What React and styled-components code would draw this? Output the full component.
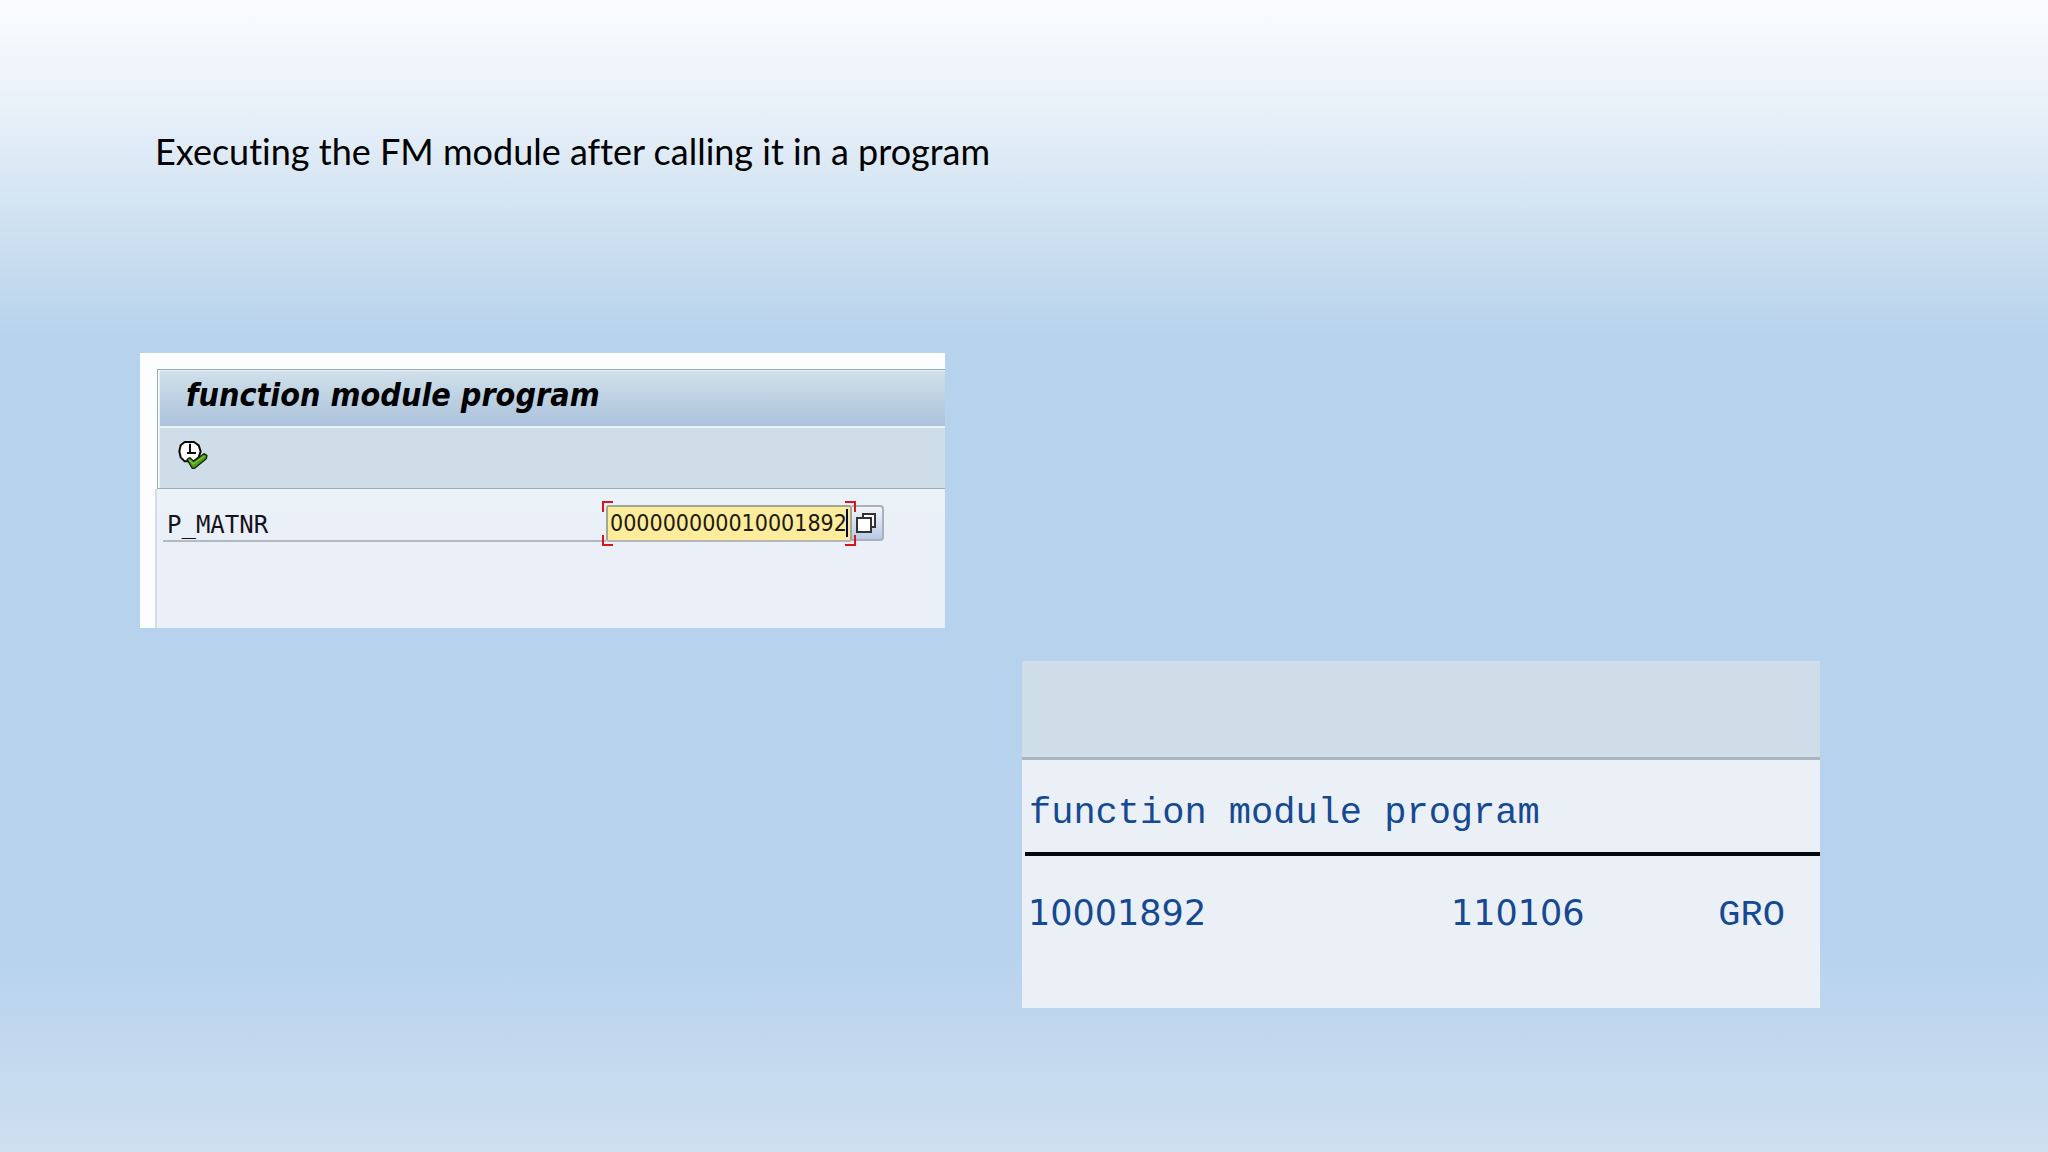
import React from 'react';
import styled, { createGlobalStyle } from 'styled-components';

const listRows = [{ material: '10001892', group: '110106', unit: 'GRO' }];

const ExecuteIcon = () => (
  <svg width="30" height="30" viewBox="42 44 90 90" aria-hidden="true">
    <path
      d="M62 50h28l14 10 6 18-6 18-14 12H62L50 96l-4-18 4-18z"
      fill="#fff"
      stroke="#0a0a0a"
      strokeWidth="6"
      strokeLinejoin="bevel"
    />
    <path d="M78 55v29M69 83h27" fill="none" stroke="#0a0a0a" strokeWidth="6" />
    <path
      d="M69 102l9-5 11 11 31-23 9 6-2 9-35 29h-7z"
      fill="#4f9a1c"
      stroke="#14240a"
      strokeWidth="4"
      strokeLinejoin="bevel"
    />
    <path d="M76 104l12 12 34-25" fill="none" stroke="#76c23a" strokeWidth="4" />
  </svg>
);

const MultipleIcon = () => (
  <svg width="22" height="22" viewBox="0 0 22 22" aria-hidden="true">
    <rect x="8" y="2" width="12" height="13" fill="#fff" stroke="#333" strokeWidth="2" />
    <rect x="2" y="6" width="14" height="14" fill="#fff" stroke="#333" strokeWidth="2" />
  </svg>
);

const App = () => {
  return (
    <>
      <GlobalStyle />
      <Slide>
        <Heading>Executing the FM module after calling it in a program</Heading>

        <SelectionShot>
          <Window>
            <TitleBar>function module program</TitleBar>
            <Toolbar>
              <IconButton type="button" aria-label="Execute">
                <ExecuteIcon />
              </IconButton>
            </Toolbar>
          </Window>
          <Screen>
            <FieldRow>
              <FieldLabel htmlFor="p-matnr">P_MATNR</FieldLabel>
              <FieldBox>
                <FieldInput id="p-matnr" defaultValue="000000000010001892" spellCheck={false} />
                <Caret />
                <Corner $y="top" $x="left" />
                <Corner $y="top" $x="right" />
                <Corner $y="bottom" $x="left" />
                <Corner $y="bottom" $x="right" />
              </FieldBox>
              <HelpButton type="button" aria-label="Possible entries">
                <MultipleIcon />
              </HelpButton>
            </FieldRow>
          </Screen>
        </SelectionShot>

        <ListShot>
          <ListToolbar />
          <ListTitle>function module program</ListTitle>
          <ListTable>
            <tbody>
              {listRows.map((row) => (
                <tr key={row.material}>
                  <NumberCell $width="53%">{row.material}</NumberCell>
                  <NumberCell $width="33%">{row.group}</NumberCell>
                  <UnitCell>{row.unit}</UnitCell>
                </tr>
              ))}
            </tbody>
          </ListTable>
        </ListShot>
      </Slide>
    </>
  );
};

export default App;

const GlobalStyle = createGlobalStyle`
  * {
    box-sizing: border-box;
  }

  body {
    margin: 0;
    font-family: Lato, "Open Sans", sans-serif;
  }
`;

const Slide = styled.main`
  min-height: 100vh;
  display: grid;
  grid-template-columns: 140fr 805fr 77fr 798fr 228fr;
  grid-template-rows: auto auto auto 1fr;
  align-items: start;
  padding-top: 127px;
  background: linear-gradient(
    180deg,
    #fafbfe 0%,
    #f0f5fb 6%,
    #dfebf6 13%,
    #cbdff0 21%,
    #b6d2ec 30%,
    #b6d2ed 82%,
    #cedff0 100%
  );
`;

const Heading = styled.h1`
  grid-column: 2 / 5;
  grid-row: 1;
  margin: 0;
  padding-left: 15px;
  font-size: 36px;
  line-height: 48px;
  font-weight: 400;
  font-variant-ligatures: none;
  color: #000;
`;

const SelectionShot = styled.section`
  grid-column: 2;
  grid-row: 2;
  margin-top: 178px;
  padding: 16px 0 0 15px;
  background: #fcfdfe;
`;

const Window = styled.div`
  margin-left: 2px;
  border: 1px solid #9aabb8;
  border-right: none;
`;

const TitleBar = styled.h2`
  margin: 0 0 0 1px;
  padding-left: 26px;
  border-top: 1px solid #e6f0f6;
  border-left: 1px solid #e6f0f6;
  border-bottom: 2px solid #eef3f6;
  background: linear-gradient(180deg, #d0e0eb 0%, #b9cee0 60%, #adc3dc 100%);
  font-family: "DejaVu Sans Condensed", "DejaVu Sans", sans-serif;
  font-size: 32px;
  line-height: 48px;
  height: 58px;
  font-style: italic;
  font-weight: 700;
  color: #000;
`;

const Toolbar = styled.div`
  display: flex;
  align-items: center;
  height: 60px;
  margin-left: 1px;
  padding: 0 0 6px 18px;
  border-left: 1px solid #e6f0f6;
  background: #cedde8;
`;

const IconButton = styled.button`
  display: flex;
  padding: 0;
  border: none;
  background: none;
`;

const Screen = styled.div`
  min-height: 139px;
  padding: 16px 0 0 6px;
  border-left: 2px solid #d3dde8;
  background: linear-gradient(180deg, #eaf2f8 0%, #ebeff7 40%, #ebeff7 100%);
`;

const FieldRow = styled.div`
  display: flex;
  align-items: flex-start;
`;

const FieldLabel = styled.label`
  flex: 0 0 443px;
  height: 37px;
  padding-left: 4px;
  border-bottom: 2px solid #b4bac4;
  font-family: "DejaVu Sans Mono", monospace;
  font-size: 24px;
  line-height: 40px;
  color: #14141e;
`;

const FieldBox = styled.div`
  position: relative;
  width: 246px;
`;

const FieldInput = styled.input`
  display: block;
  width: 100%;
  height: 37px;
  padding: 0 0 2px 2px;
  border: 2px solid #a3a595;
  border-bottom-color: #b4b7b4;
  border-radius: 3px;
  outline: none;
  background: #fdec9b;
  font-family: "DejaVu Sans Condensed", "DejaVu Sans", sans-serif;
  font-size: 23px;
  color: #1c1a10;
`;

const Caret = styled.span`
  position: absolute;
  top: 4px;
  right: 4px;
  width: 2px;
  height: 28px;
  background: #0a0a3c;
`;

const Corner = styled.span`
  position: absolute;
  ${({ $y }) => $y}: -4px;
  ${({ $x }) => $x}: -4px;
  width: 11px;
  height: 11px;
  border-${({ $y }) => $y}: 2px solid #d8141c;
  border-${({ $x }) => $x}: 2px solid #d8141c;
`;

const HelpButton = styled.button`
  display: flex;
  align-items: center;
  height: 36px;
  width: 32px;
  padding: 0 0 0 3px;
  border: 2px solid #aab0bc;
  border-left: none;
  border-radius: 0 4px 4px 0;
  background: linear-gradient(180deg, #f2f5fa 0%, #b9c9e4 100%);
`;

const ListShot = styled.section`
  grid-column: 4;
  grid-row: 3;
  margin-top: 33px;
  min-height: 347px;
  background: #ebf0f7;
`;

const ListToolbar = styled.div`
  height: 99px;
  border-bottom: 3px solid #a7b6c2;
  background: #cedde8;
`;

const ListTitle = styled.h2`
  margin: 0 0 0 3px;
  padding: 29px 0 15px 4px;
  border-bottom: 4px solid #06080c;
  font-family: "Liberation Mono", monospace;
  font-size: 37px;
  line-height: 48px;
  font-weight: 400;
  color: #154a92;
`;

const ListTable = styled.table`
  width: 100%;
  margin-top: 33px;
  border-collapse: collapse;
  table-layout: fixed;
`;

const NumberCell = styled.td`
  width: ${({ $width }) => $width};
  padding: 0 0 0 6px;
  vertical-align: baseline;
  font-family: "DejaVu Sans", sans-serif;
  font-size: 35px;
  line-height: 48px;
  color: #154a92;
`;

const UnitCell = styled.td`
  padding: 0 0 0 10px;
  vertical-align: baseline;
  font-family: "Liberation Mono", monospace;
  font-size: 37px;
  line-height: 48px;
  color: #154a92;
`;
